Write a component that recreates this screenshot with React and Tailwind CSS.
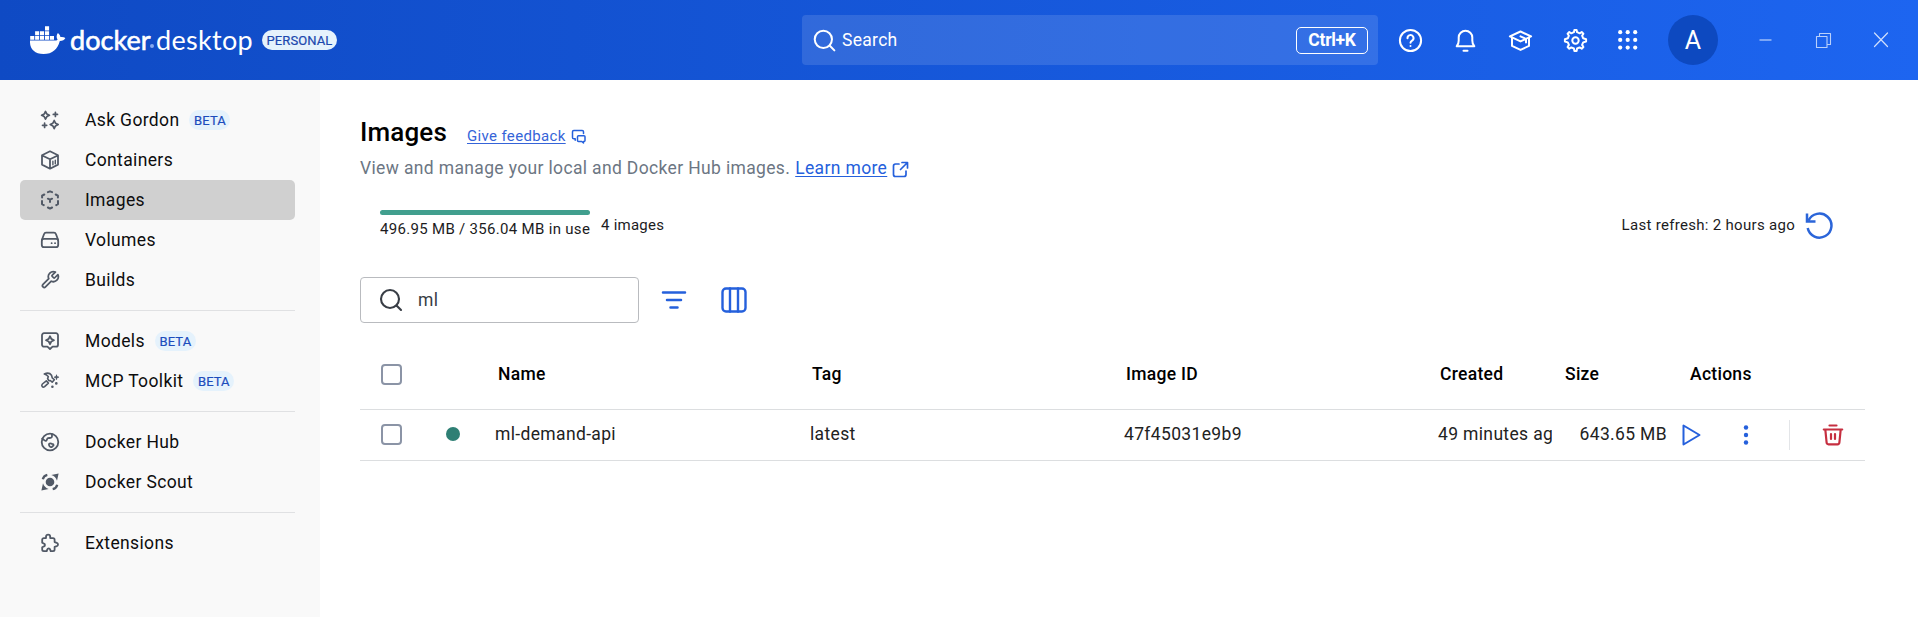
import React from "react";

const Svg = ({ size = 24, box = 24, sw = 2, className = "", children }) => (
  <svg
    width={size}
    height={size}
    viewBox={`0 0 ${box} ${box}`}
    fill="none"
    stroke="currentColor"
    strokeWidth={sw}
    strokeLinecap="round"
    strokeLinejoin="round"
    className={`block shrink-0 ${className}`}
  >
    {children}
  </svg>
);

const Whale = () => (
  <svg width="36" height="29" viewBox="0 0 36 29" fill="#fff" className="block shrink-0">
    <path d="M15 .3h4.1v4.1H15zM5.1 5.2h4.1v4H5.1zM10 5.2h4.1v4H10zM15 5.2h4.1v4H15zM.2 10.1h4.1v3.7H.2zM5.1 10.1h4.1v3.7H5.1zM10 10.1h4.1v3.7H10zM15 10.1h4.1v3.7H15zM19.9 10.1H24v3.7h-4.1z" />
    <path d="M0 14.6h24.6c1.4 0 2.4-.4 3-.9-1.400-2-1.200-4.800.3-6.700 1.600 1.200 2.400 2.600 2.500 4.100 1.600-.3 3.500-.1 5 .8-.9 1.900-2.900 3-5.600 3C27.600 23 22.500 28 13.500 28 5.200 28 .2 23.400 0 16.500z" />
  </svg>
);

const SparkIcon = () => (
  <Svg size={20} box={20} sw={1.7}>
    <path d="M5.500 1.500 6.900 4.100 9.400 5.300 6.900 6.600 5.500 9.200 4.200 6.600 1.600 5.300 4.200 4.100z" />
    <path d="M14.200 10.500 15.500 13.200 18.200 14.500 15.500 15.900 14.200 18.500 12.900 15.900 10.200 14.500 12.900 13.200z" />
    <path d="M15.400 2.300v4.200M13.300 4.400h4.200M4.600 13.200v4.200M2.500 15.300h4.200" />
  </Svg>
);
const ContainerIcon = () => (
  <Svg size={20} box={20} sw={1.8}>
    <path d="M10 1.300 18 5.300v9.300L10 18.700 2 14.600V5.300zM2.200 5.500 10 9.300l7.800-3.800M10 9.300v9.300" />
    <path d="M12.900 11.300v3.500M15.300 10.200v3.500" strokeWidth="1.4" />
  </Svg>
);
const ImagesIcon = () => (
  <Svg size={20} box={20} sw={2}>
    <path d="M7.900 2.200 10 1.300l2.100.9M2.100 7.500V5.700l2.200-1.200M17.900 7.500V5.700l-2.200-1.200M2 10.900v3.200l1.800 1M18 10.900v3.200l-1.800 1M7.900 17.500l2.100 1.100 2.100-1.100" />
    <path d="M7.900 8.700 10 9.700l2.100-1M10 9.700v2.200" />
  </Svg>
);
const VolumesIcon = () => (
  <Svg size={20} box={20} sw={1.8}>
    <path d="M2 9.500 4 4.300C4.400 3.200 5 2.700 6 2.700h8c1 0 1.600.5 2 1.600l2 5.200" />
    <rect x="1.800" y="8.900" width="16.400" height="8.200" rx="2.200" />
    <path d="M11.600 13.200h.1M15 13.200h.1" />
  </Svg>
);
const WrenchIcon = () => (
  <Svg size={20} box={24} sw={2.100}>
    <path d="M14.700 6.300a1 1 0 0 0 0 1.400l1.600 1.600a1 1 0 0 0 1.400 0l3.770-3.770a6 6 0 0 1-7.940 7.940l-6.910 6.910a2.120 2.120 0 0 1-3-3l6.910-6.910a6 6 0 0 1 7.940-7.940l-3.760 3.760z" />
  </Svg>
);
const ModelsIcon = () => (
  <Svg size={20} box={20} sw={1.800}>
    <path d="M4 2.200h12a2 2 0 0 1 2 2v9.500a2 2 0 0 1-2 2h-3.400L10 18l-2.600-2.300H4a2 2 0 0 1-2-2V4.200a2 2 0 0 1 2-2z" />
    <path d="M10 5.200 11.300 7.900 14 9.200 11.300 10.500 10 13.200 8.700 10.500 6 9.200 8.700 7.900z" />
  </Svg>
);
const ToolkitIcon = () => (
  <Svg size={20} box={20} sw={1.600}>
    <path d="M4.300 3C6.800 1.900 10 2.100 11.500 4.300l.8 2.700 2 1.700-2.100 2.500-1.900-1.700-1.500.2L7.600 7.500l.7-1.800C7.500 4.300 6.100 3.500 4.300 3z" />
    <path d="M6.300 9.800 2.400 13c-1.500 1.600.2 4 2.200 2.700l3.800-3.600z" />
    <path d="M16.500 6.300v-.1M12.400 15.700v.1M16.300 12.300v.1" strokeWidth="2.600" />
    <path d="M16.500 4.200v4M14.500 6.200h4" strokeWidth="1.200" />
  </Svg>
);
const HubIcon = () => (
  <Svg size={20} box={20} sw={1.800}>
    <circle cx="10" cy="10" r="8.300" />
    <path d="M2.200 6.600c1.300.6 2.300 2.700 3.800 2.200 1.300-.5.600-2.200 2-2.700 1.400-.4 2.900.4 3.700-.8.700-1.100.1-2.200.2-3.400" />
    <path d="M9.300 11.700c.9-.9 1.800 0 2.900.2 1.700.2 1.700 1.600.7 2.100-.8.500-1 1.400-2 1.200-1.500-.3-2.500-2.500-1.600-3.500z" />
  </Svg>
);
const ScoutIcon = () => (
  <Svg size={20} box={20} sw={2}>
    <circle cx="10" cy="10" r="4.300" fill="currentColor" stroke="none" />
    <path d="M11.300 3 18.600 1.400 17 8.700C16.300 6 14 3.700 11.300 3zM8.700 17l-7.300 1.600L3 11.300C3.700 14 6 16.300 8.700 17z" fill="currentColor" stroke="none" />
    <path d="M2.800 7.300C3.300 4.900 4.900 3.300 7.300 2.800M17.200 12.700c-.5 2.400-2.100 4-4.500 4.500" strokeLinecap="butt" strokeWidth="2.300" />
  </Svg>
);
const PuzzleIcon = () => (
  <Svg size={20} box={20} sw={1.800}>
    <path d="M2.200 6.700a1.600 1.600 0 0 1 1.600-1.600h2.200V3.700a2.100 2.100 0 0 1 4.200 0v1.400h2.800a1.600 1.600 0 0 1 1.600 1.600v2.400l2.200.7a1.800 1.800 0 0 1 0 3.400l-2.200.7v2.700a1.600 1.600 0 0 1-1.600 1.600h-2.300l-.6-1.800a1.500 1.500 0 0 0-2.800 0l-.6 1.800H3.800a1.600 1.600 0 0 1-1.600-1.600v-2.400l1.800-.8a1.500 1.500 0 0 0 0-2.800l-1.800-.8z" />
  </Svg>
);

const groups = [
  [
    ["Ask Gordon", SparkIcon, true],
    ["Containers", ContainerIcon],
    ["Images", ImagesIcon],
    ["Volumes", VolumesIcon],
    ["Builds", WrenchIcon],
  ],
  [
    ["Models", ModelsIcon, true],
    ["MCP Toolkit", ToolkitIcon, true],
  ],
  [
    ["Docker Hub", HubIcon],
    ["Docker Scout", ScoutIcon],
  ],
  [["Extensions", PuzzleIcon]],
];

function Header() {
  return (
    <header className="flex h-20 shrink-0 items-center bg-gradient-to-r from-[#0f4ac4] to-[#1d65f0] text-white">
      <div className="flex w-[802px] items-center pl-[30px]">
        <Whale />
        <div className="ml-1 flex h-[38px] items-center pb-[2px] font-[Lato,sans-serif] text-[27px] leading-none whitespace-nowrap">
          <span className="w-[81px] tracking-[0.050px] [-webkit-text-stroke:0.6px_white]">docker</span>
          <span className="mt-[13px] mr-[2px] ml-[-1px] h-1 w-1 rounded-full bg-[#86a9ee]" />
          <span className="w-[97px] tracking-[0.3px]">desktop</span>
        </div>
        <span className="ml-[9px] flex h-5 w-[75px] items-center justify-center rounded-full bg-[#e5f2fc] pt-px text-[13px] tracking-[0.100px] text-[#1c48ae] [-webkit-text-stroke:0.2px_#1c48ae]">
          PERSONAL
        </span>
      </div>
      <div className="flex h-[50px] w-[576px] items-center rounded bg-white/12 pr-[10px] pl-[11px]">
        <Svg size={23} sw={2.100}>
          <circle cx="10.800" cy="10.800" r="9" />
          <path d="m17.300 17.300 5 5" />
        </Svg>
        <span className="ml-[6px] pt-px text-[17.500px] tracking-[0.300px]">Search</span>
        <span className="ml-auto flex h-[27px] w-[72px] items-center justify-center rounded-[5px] border border-white text-[17.500px] font-bold tracking-[-0.300px]">
          Ctrl+K
        </span>
      </div>
      <div className="flex items-center pl-[5px]">
        <span className="flex w-[55px] justify-center">
          <Svg size={25} box={25} sw={2}>
            <circle cx="12.500" cy="12.500" r="10.600" />
            <path d="M9.500 10.200a3 3 0 1 1 4.600 2.400c-1 .7-1.600 1.100-1.600 2.200M12.500 18v.1" />
          </Svg>
        </span>
        <span className="flex w-[55px] justify-center">
          <Svg size={25} box={25} sw={2}>
            <path d="M3.700 18.200h17.600c-1.600-1.600-2-3.200-2-5.800V9.500a6.800 6.800 0 0 0-13.600 0v2.900c0 2.600-.4 4.200-2 5.800z" />
            <path d="M10.500 22.800h4" />
          </Svg>
        </span>
        <span className="flex w-[55px] justify-center">
          <Svg size={25} box={25} sw={2}>
            <path d="M1.900 8.400 12.500 3.500l10.600 4.900-10.600 5z" />
            <path d="M4 9.700v8.200l8.500 4 8.500-4V9.700M12.500 8.400l5.500 2.500v3.700" />
          </Svg>
        </span>
        <span className="flex w-[55px] justify-center">
          <Svg size={25} box={25} sw={2}>
            <path d="m10.900 4.200 .5-2.200h2.200l.5 2.200 2.600 1.100 2-1.300 1.700 1.700-1.300 2 1.100 2.600 2.900.9v2.300l-2.900.9-1.100 2.500 1.300 2.100-1.700 1.700-2.100-1.300-2.500 1.100-.5 2.500h-2.200l-.5-2.500-2.600-1.100-2 1.300-1.700-1.700 1.300-2.100-1.100-2.500-2.900-.9v-2.300l2.900-.9 1.100-2.600-1.300-2L6.300 4l2 1.300z" />
            <circle cx="12.500" cy="12.500" r="3.200" />
          </Svg>
        </span>
        <span className="flex w-[49px] justify-center">
          <svg width="20" height="20" viewBox="0 0 20 20" fill="#fff">
            {[2.200, 9.900, 17.600].map((y) => [2.200, 9.700, 17.200].map((x) => <circle key={`${x}-${y}`} cx={x} cy={y} r="2.100" />))}
          </svg>
        </span>
        <span className="ml-4 flex h-[50px] w-[50px] items-center justify-center rounded-full bg-[#0d49c0] pt-px text-[25px]">A</span>
        <span className="ml-[37px] flex w-[58px] items-center">
          <Svg size={20} box={20} sw={1.500} className="text-[#9dbdf8]">
            <path d="M4.500 10h12" strokeLinecap="butt" />
          </Svg>
        </span>
        <span className="flex w-[58px] items-center">
          <Svg size={20} box={20} sw={1.100} className="text-[#b9d0fb]">
            <path d="M3.500 6.500h10.500V17.500H3.500zM6.500 6.500v-3h11v11H14" />
          </Svg>
        </span>
        <Svg size={20} box={20} sw={1.200} className="text-[#d2e0fc]">
          <path d="M3.500 3 16.500 16.500M16.500 3 3.500 16.500" />
        </Svg>
      </div>
    </header>
  );
}

function Sidebar() {
  return (
    <nav className="flex w-80 shrink-0 flex-col bg-[#f9f9f9] pt-5 pr-[25px] pl-5">
      {groups.map((items, g) => (
        <div key={g} className={g ? "mt-[10px] border-t border-[#e0e1e3] pt-[10px]" : ""}>
          {items.map(([label, Icon, beta]) => (
            <div
              key={label}
              className={`flex h-10 items-center rounded-[5px] pl-5 text-[17.500px] tracking-[0.360px] text-[#0d0d0e] ${label === "Images" ? "bg-[#d0d0d0]" : ""}`}
            >
              <span className="w-[45px] text-[#515966]">
                <Icon />
              </span>
              <span className="pt-px">{label}</span>
              {beta && (
                <span className="ml-[10px] flex h-5 w-[41px] items-center justify-center rounded-full bg-[#e5f2fc] pt-px text-[13px] tracking-[0.100px] text-[#1c4cbc] [-webkit-text-stroke:0.2px_#1c4cbc]">
                  BETA
                </span>
              )}
            </div>
          ))}
        </div>
      ))}
    </nav>
  );
}

const Checkbox = () => <span className="block h-[21px] w-[21px] rounded-[4px] border-2 border-[#8b94a6]" />;

const columns = "grid grid-cols-[125px_315px_314px_314px_126px_124px_1fr] items-center";

function Table() {
  return (
    <div className="mt-[27px] text-[17.500px] whitespace-nowrap">
      <div className={`${columns} h-[60px] border-b border-[#dcdee0] pb-[10px] font-medium tracking-[0.280px] text-black *:pl-3`}>
        <div className="!pl-[21px]"><Checkbox /></div>
        <div className="!pl-[13px]">Name</div>
        <div>Tag</div>
        <div>Image ID</div>
        <div>Created</div>
        <div className="!pl-[11px]">Size</div>
        <div>Actions</div>
      </div>
      <div className={`${columns} h-[51px] border-b border-[#dcdee0] pb-px tracking-[0.350px] text-[#222] *:pl-[10px]`}>
        <div className="flex items-center !pl-[21px]">
          <Checkbox />
          <span className="mb-[2px] ml-[44px] h-[14px] w-[14px] rounded-full bg-[#2e7f74]" />
        </div>
        <div>ml-demand-api</div>
        <div>latest</div>
        <div>47f45031e9b9</div>
        <div className="w-[124px] overflow-hidden">49 minutes ag</div>
        <div className="pr-[11px] !pl-0 text-right">643.65 MB</div>
        <div className="flex items-center !pl-[2px] text-[#2560dc]">
          <Svg size={25} box={25} sw={2}>
            <path d="M3.500 3.500v19L19.500 13z" />
          </Svg>
          <svg width="6" height="20" viewBox="0 0 6 20" fill="currentColor" className="ml-[38px]">
            <circle cx="3" cy="2.500" r="2.200" />
            <circle cx="3" cy="10" r="2.200" />
            <circle cx="3" cy="17.500" r="2.200" />
          </svg>
          <span className="ml-10 h-[30px] w-px bg-[#e3e5e8]" />
          <Svg size={22} box={22} sw={2.200} className="ml-[32px] text-[#c62f40]">
            <path d="M7.500 1.500h7M1.800 5.500h18.400M3.300 5.500l1.300 13c.1 1.100.8 1.800 1.900 1.800h9c1.100 0 1.800-.7 1.900-1.800l1.300-13" />
            <path d="M9 10v5M13 10v5" />
          </Svg>
        </div>
      </div>
    </div>
  );
}

export default function App() {
  return (
    <div className="flex h-[617px] w-[1918px] flex-col overflow-hidden bg-white font-[Roboto,sans-serif]">
      <Header />
      <div className="flex flex-1">
        <Sidebar />
        <main className="flex-1 pt-[34px] pr-[53px] pl-10">
          <div className="flex h-[38px] items-baseline">
            <h1 className="text-[26px] leading-[37px] font-medium tracking-[0.150px] text-black">Images</h1>
            <a className="ml-5 text-[15px] tracking-[0.350px] text-[#3564d8] underline underline-offset-2">Give feedback</a>
            <Svg size={15} box={15} sw={1.500} className="ml-[5px] translate-y-[3px] text-[#2560dc]">
              <path d="M4.200 11.300V9.800H2.800a1.300 1.300 0 0 1-1.300-1.300V2.800a1.300 1.300 0 0 1 1.300-1.300h8.400a1.300 1.300 0 0 1 1.300 1.300v1.700" />
              <path d="M7.500 6.800H13a1 1 0 0 1 1 1v3.700a1 1 0 0 1-1 1h-.5V14l-1.700-1.500H7.500a1 1 0 0 1-1-1V7.800a1 1 0 0 1 1-1z" />
            </Svg>
          </div>
          <div className="flex h-8 items-center text-[17.500px] tracking-[0.350px] text-[#6c7683]">
            View and manage your local and Docker Hub images.
            <a className="ml-[5px] text-[#2560dc] underline underline-offset-2">Learn more</a>
            <Svg size={17} box={17} sw={1.700} className="mt-[3px] ml-[5px] text-[#2560dc]">
              <path d="M7 3H3.500a2 2 0 0 0-2 2v8.500a2 2 0 0 0 2 2H12a2 2 0 0 0 2-2V10M10 1.500h5.500V7M15 2 8.500 8.500" />
            </Svg>
          </div>
          <div className="mt-[21px] flex h-10 items-center pr-[31px] pl-5 text-[15px] text-[#1c1c1e]">
            <div className="w-[210px]">
              <div className="h-[5px] rounded-full bg-[#419f8e]" />
              <div className="mt-[3px] mb-px leading-[22px] tracking-[0.310px] whitespace-nowrap">496.95 MB / 356.04 MB in use</div>
            </div>
            <span className="ml-[11px] tracking-[0.250px]">4 images</span>
            <span className="ml-auto tracking-[0.300px]">Last refresh: 2 hours ago</span>
            <Svg size={30} box={30} sw={2.500} className="ml-[9px] text-[#2b65d9]">
              <path d="M4.500 10.700A12 12 0 1 1 3.700 18" strokeLinecap="butt" />
              <path d="M3 3.500v8h8.500" strokeLinecap="butt" strokeLinejoin="miter" />
            </Svg>
          </div>
          <div className="mt-8 flex h-[46px] items-center">
            <div className="flex h-[46px] w-[279px] items-center rounded border border-[#b9bbbf] pl-[18px] text-[17.500px] text-[#383d45]">
              <Svg size={24} box={24} sw={2.100}>
                <circle cx="11" cy="11" r="9" />
                <path d="m17.500 17.500 4.500 4.500" />
              </Svg>
              <span className="ml-[15px] tracking-[0.340px]">ml</span>
            </div>
            <Svg size={26} box={26} sw={2.500} className="ml-[22px] text-[#2560dc]">
              <path d="M2 5.500h22M6 13h14M9.500 20.500h7" />
            </Svg>
            <Svg size={26} box={26} sw={2.400} className="ml-[34px] text-[#2560dc]">
              <rect x="1.500" y="1.500" width="23" height="23" rx="3.500" />
              <path d="M9 1.500v23M17 1.500v23" />
            </Svg>
          </div>
          <Table />
        </main>
      </div>
    </div>
  );
}
